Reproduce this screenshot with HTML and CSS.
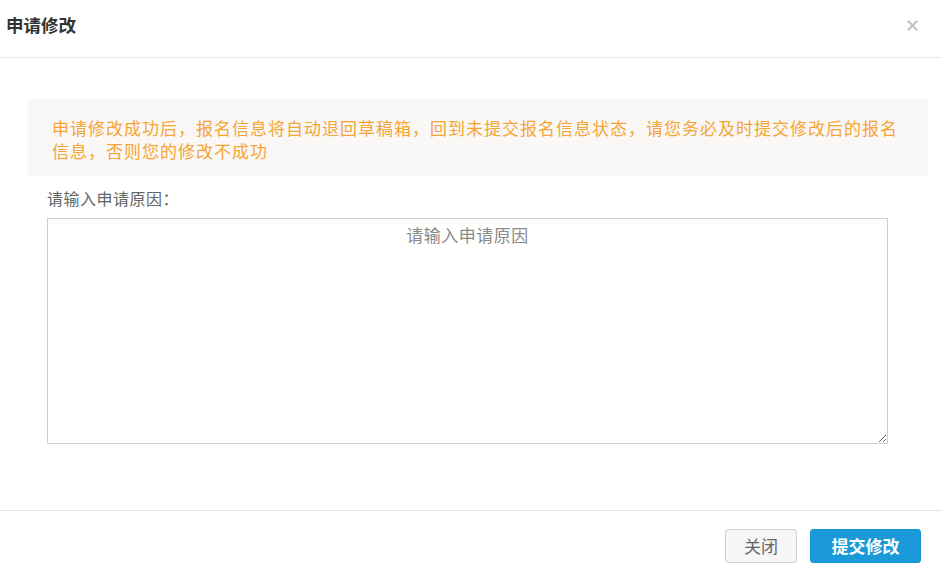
FILE: index.html
```html
<!DOCTYPE html>
<html lang="zh-CN">
<head>
<meta charset="utf-8">
<title>申请修改</title>
<link rel="stylesheet" href="styles.css">
</head>
<body>
<div class="dialog">
  <div class="dialog-header">
    <h3 class="dialog-title">申请修改</h3>
    <span class="dialog-close" aria-label="关闭">
      <svg width="11" height="11" viewBox="0 0 11 11"><path d="M1.5 1.5 L9.5 9.5 M9.5 1.5 L1.5 9.5" stroke="#c4c4c4" stroke-width="2.4" stroke-linecap="round"/></svg>
    </span>
  </div>
  <div class="dialog-body">
    <div class="notice">申请修改成功后，报名信息将自动退回草稿箱，回到未提交报名信息状态，请您务必及时提交修改后的报名信息，否则您的修改不成功</div>
    <label class="field-label" for="reason">请输入申请原因：</label>
    <textarea id="reason" class="reason" placeholder="请输入申请原因"></textarea>
  </div>
  <div class="dialog-footer">
    <button class="btn btn-default">关闭</button>
    <button class="btn btn-primary">提交修改</button>
  </div>
</div>
</body>
</html>
```

FILE: styles.css
```css
html, body {
  margin: 0;
  padding: 0;
  background: #ffffff;
}

body {
  font-family: "Noto Sans CJK SC", "Noto Sans", "Liberation Sans", sans-serif;
  color: #333;
}

.dialog {
  width: 942px;
}

.dialog-header {
  height: 58px;
  border-bottom: 1px solid #e8e8e8;
  display: flex;
  align-items: center;
  justify-content: space-between;
  padding: 0 24px 8px 6px;
  box-sizing: border-box;
}

.dialog-title {
  margin: 0;
  font-size: 17.5px;
  font-weight: 700;
  color: #333;
  line-height: 24px;
}

.dialog-close {
  display: flex;
  margin-top: 2px;
}

.dialog-body {
  padding: 41px 0 66px 0;
  display: flex;
  flex-direction: column;
}

.notice {
  margin-left: 28px;
  width: 900px;
  box-sizing: border-box;
  background: #faf8f7;
  color: #f6a534;
  font-size: 17px;
  line-height: 23px;
  padding: 17px 24px 14px 24px;
  letter-spacing: 1px;
}

.field-label {
  margin: 10px 0 8px 47px;
  font-size: 16px;
  line-height: 24px;
  color: #666;
  letter-spacing: 0.5px;
}

.reason {
  margin-left: 47px;
  width: 841px;
  height: 226px;
  box-sizing: border-box;
  border: 1px solid #d0d0d0;
  border-radius: 0;
  padding: 5px 8px;
  font-family: inherit;
  font-size: 17px;
  line-height: 22px;
  text-align: center;
  color: #333;
  resize: both;
  outline: none;
}

.reason::placeholder {
  color: #8a8a8a;
  letter-spacing: 0.5px;
}

.dialog-footer {
  border-top: 1px solid #e5e5e5;
  padding: 18px 21px 0 0;
  display: flex;
  justify-content: flex-end;
  gap: 13px;
}

.btn {
  height: 34px;
  border-radius: 3px;
  font-family: inherit;
  font-size: 17px;
  line-height: 32px;
  padding: 0;
  cursor: pointer;
}

.btn-default {
  width: 72px;
  background: #f6f6f6;
  border: 1px solid #d2d2d2;
  color: #666;
}

.btn-primary {
  width: 111px;
  background: #1a9ad9;
  border: 1px solid #1894d2;
  color: #ffffff;
  font-weight: 700;
}
```
